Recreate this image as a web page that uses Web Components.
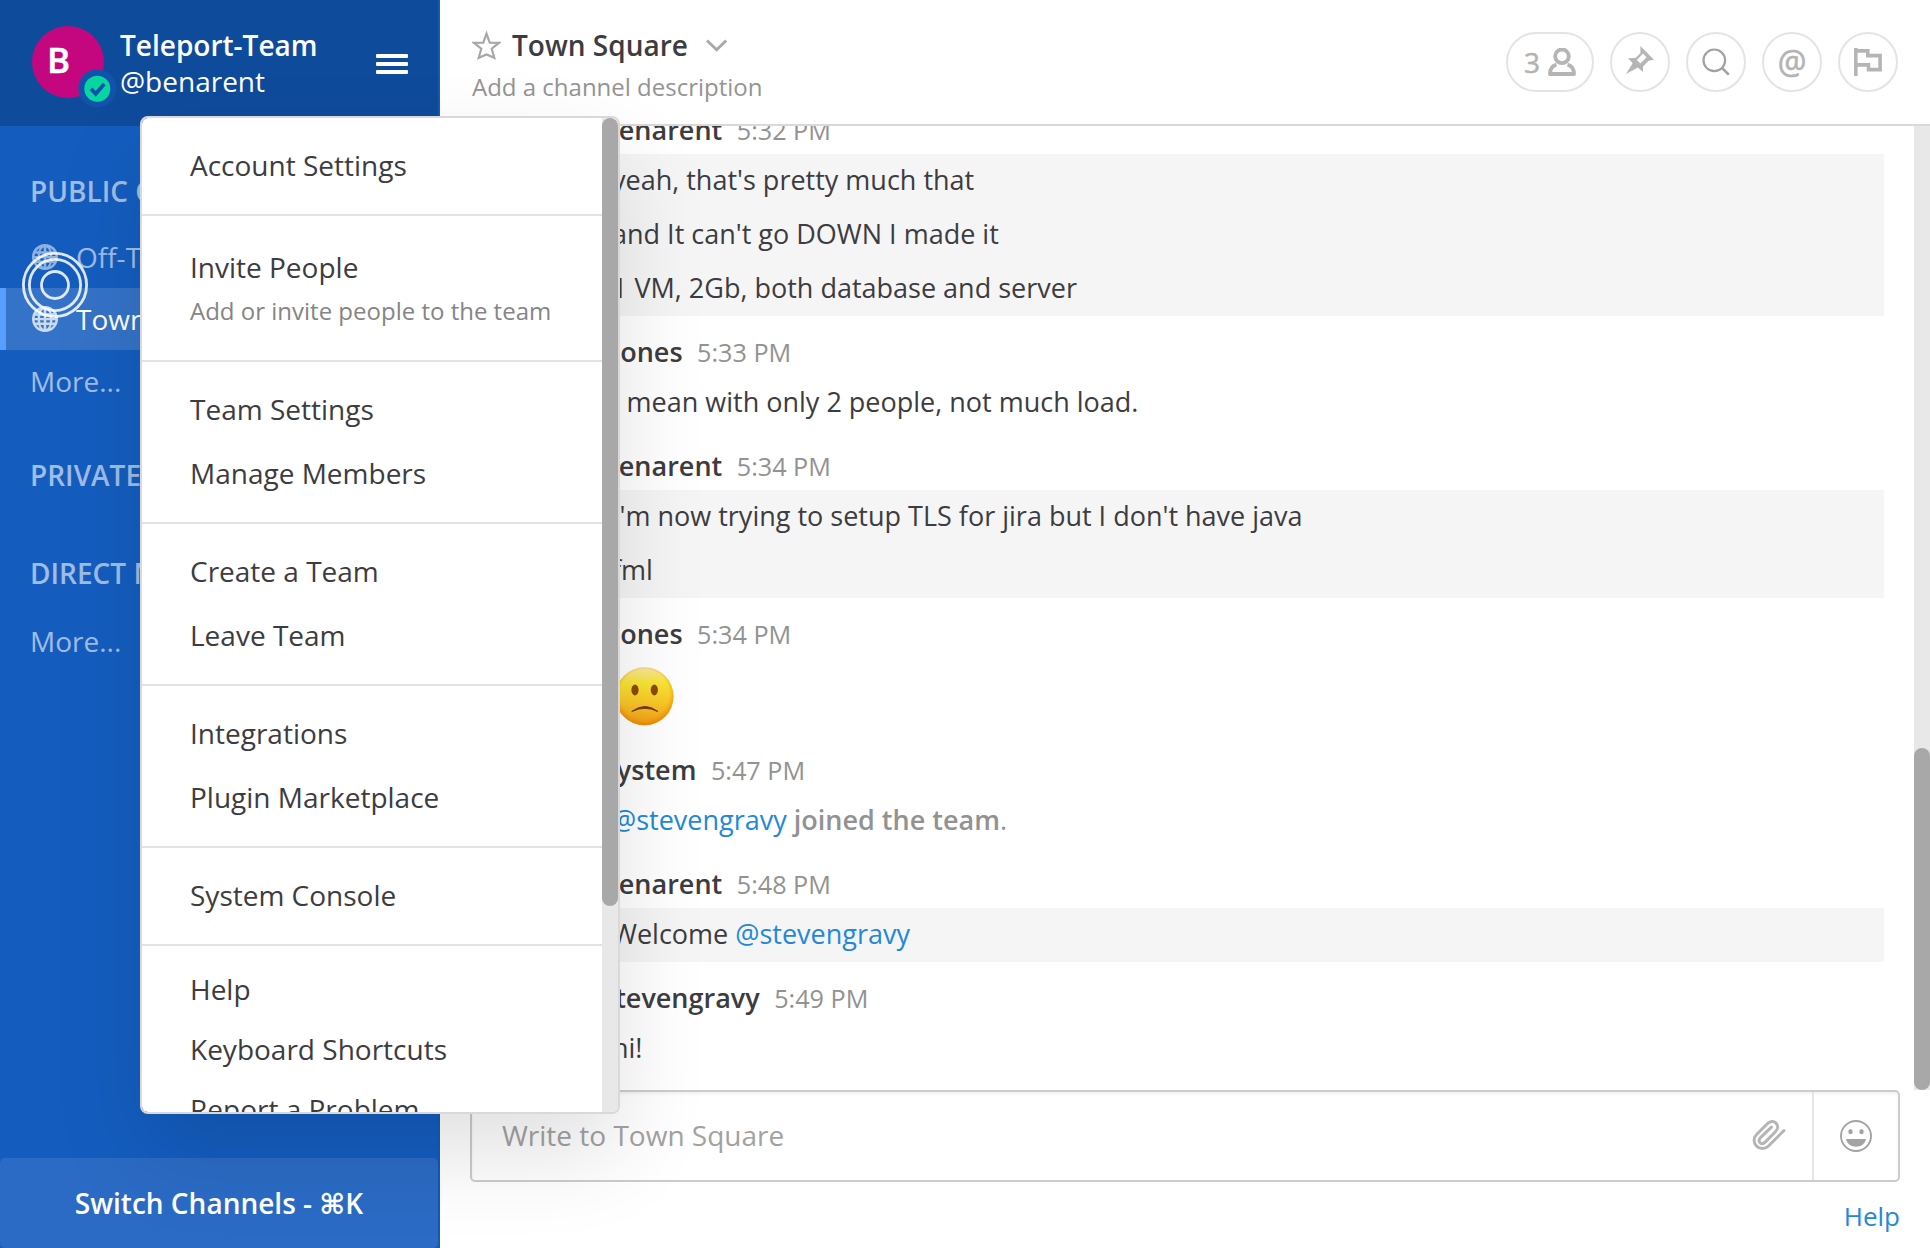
<!DOCTYPE html>
<html lang="en">
<head>
<meta charset="utf-8">
<title>Town Square - Teleport-Team</title>
<style>
html,body{margin:0;height:100%;overflow:hidden}
body{font-family:"Open Sans","DejaVu Sans",sans-serif;font-size:28px;color:#3d3c40;background:#fff}
</style>
</head>
<body>
<chat-app></chat-app>
<script>
const define = (name, css, html) => {
  customElements.define(name, class extends HTMLElement {
    constructor() {
      super();
      const root = this.attachShadow({ mode: 'open' });
      const t = document.createElement('template');
      t.innerHTML = `<style>*{box-sizing:border-box}${css}</style>` +
        (typeof html === 'function' ? html(this) : html);
      root.append(t.content.cloneNode(true));
    }
  });
};

const GLOBE = `<svg width="26" height="26" viewBox="0 0 26 26"><path d="M13 0a13 13 0 1 0 0 26a13 13 0 1 0 0-26M11.700 3.200v4.100h-3.300q1.200-3 3.300-4.100M14.300 3.200q2.100 1.100 3.300 4.100h-3.300zM7.800 3.900q-1 1.600-1.500 3.400h-2q1.400-2.200 3.500-3.400M18.200 3.900q2.100 1.200 3.500 3.400h-2q-.5-1.800-1.500-3.400M3.100 9.700h2.700l-.2 2.200h-2.900q0-1.200.4-2.200M8.300 9.700h3.400v2.200h-3.600zM14.300 9.700h3.400l.2 2.200h-3.600zM20.200 9.700h2.700q.4 1 .4 2.200h-2.900zM2.700 14.300h2.900l.2 2.200h-2.700q-.4-1-.4-2.200M8.100 14.300h3.600v2.200h-3.400zM14.300 14.300h3.600l-.2 2.200h-3.400zM20.400 14.300h2.900q0 1.200-.4 2.200h-2.700zM4.300 18.900h2q.5 1.800 1.500 3.300q-2.100-1.100-3.500-3.300M8.400 18.900h3.300v4q-2.100-1-3.300-4M14.300 18.900h3.300q-1.200 3-3.300 4zM19.700 18.900h2q-1.400 2.200-3.500 3.300q1-1.500 1.500-3.300"/></svg>`;

define('user-avatar', `
:host{display:block;position:relative;width:72px;height:72px;flex:none}
.face{width:72px;height:72px;border-radius:50%;background:#c4077f;color:#fff;font:600 35px/68px "Open Sans",sans-serif;padding-left:15px;-webkit-text-stroke:.5px #fff}
svg{position:absolute;left:46px;top:43px}`,
`<div class="face">B</div>
<svg width="39" height="39" viewBox="0 0 39 39"><circle cx="19.3" cy="19.3" r="19" fill="#1153ab"/><circle cx="19.3" cy="19.8" r="13" fill="#06d6a0"/><path d="M13 19.8l4.7 5 8.5-9.8" fill="none" stroke="#1153ab" stroke-width="3.8"/></svg>`);

define('team-header', `
:host{display:flex;height:126px;background:#0f4b9b;color:#fff;padding:26px 30px 0 32px;flex:none;align-items:flex-start}
.names{margin-left:16px;flex:1;line-height:36px;margin-top:1px}
.team{font-weight:600;height:36px}
.user{height:36px}
.burger{display:flex;flex-direction:column;gap:4px;margin-top:28px}
.burger i{display:block;width:32px;height:4px;background:#fff;border-radius:1px}`,
`<user-avatar></user-avatar>
<div class="names"><div class="team">Teleport-Team</div><div class="user">@benarent</div></div>
<div class="burger"><i></i><i></i><i></i></div>`);

define('channel-section', `
:host{display:block;white-space:nowrap}
h4{margin:0;padding-left:30px;font-weight:600;font-size:28px;line-height:67px;height:68px;color:rgba(255,255,255,.6)}`,
el => `<h4>${el.getAttribute('label')}</h4><slot></slot>`);

define('channel-item', `
:host{display:flex;height:62px;line-height:62px;padding-left:30px;color:rgba(255,255,255,.6);align-items:center}
:host([active]){background:rgba(255,255,255,.14);color:#fff;border-left:6px solid #579eff;padding-left:24px}
svg{fill:rgba(255,255,255,.52);fill-rule:evenodd;margin:0 18px 0 2px}
:host([active]) svg{fill:rgba(255,255,255,.74)}`,
el => `${el.hasAttribute('public') ? GLOBE : ''}<span><slot></slot></span>`);

define('side-bar', `
:host{display:flex;flex-direction:column;width:440px;height:100%;background:#145dbf;border-right:2px solid #1659b2;flex:none;overflow:hidden}
nav{flex:1;padding-top:32px;display:flex;flex-direction:column}
.priv{margin-top:30px}
.dir{margin-top:30px}
.dir channel-item{margin-top:2px}
team-header{margin-right:-2px;border-right:2px solid #1556ae}
.switch{height:90px;background:#2b6bc5;border-radius:5px;color:#fff;font-weight:600;text-align:center;line-height:90px;flex:none}`,
`<team-header></team-header>
<nav>
<channel-section label="PUBLIC CHANNELS"><channel-item public>Off-Topic</channel-item><channel-item public active>Town Square</channel-item><channel-item>More...</channel-item></channel-section>
<channel-section class="priv" label="PRIVATE CHANNELS"></channel-section>
<channel-section class="dir" label="DIRECT MESSAGES"><channel-item>More...</channel-item></channel-section>
</nav>
<div class="switch">Switch Channels - ⌘K</div>`);

define('round-button', `
:host{display:flex;align-items:center;justify-content:center;width:60px;height:60px;border:2px solid #e4e4e4;border-radius:30px;color:#b5b5b5}
:host([wide]){width:88px}`, `<slot></slot>`);

define('channel-header', `
:host{display:flex;height:126px;border-bottom:2px solid #d9d9d9;padding:0 32px;flex:none;background:#fff;justify-content:space-between}
.left{padding-top:27px}
.title{display:flex;font-weight:600;line-height:36px;height:36px}
.title .star{margin:4px 11px 0 0}
.title .chev{margin:11px 0 0 17px}
.desc{font-size:24px;line-height:34px;color:#949494;margin-top:7px}
.right{display:flex;gap:16px;padding-top:32px}
svg{display:block;fill:none;stroke:#b5b5b5}
.n{font-size:28px;line-height:40px;color:#b3b3b3;-webkit-text-stroke:.5px #b3b3b3;margin-right:8px}
.at{font-size:32px;line-height:40px;-webkit-text-stroke:.6px #b3b3b3}`,
`<div class="left"><div class="title">
<svg class="star" width="29" height="30" viewBox="0 0 29 30"><path style="stroke:#a8a8a8" stroke-width="2.200" d="M14.500 2.600L17.700 11.600L27 11.900L19.700 17.700L22.300 26.800L14.500 23.400L6.700 26.800L9.300 17.700L2 11.900L11.300 11.600Z"/></svg>
<span>Town Square</span>
<svg class="chev" width="24" height="16" viewBox="0 0 24 16"><path style="stroke:#a8a8a8" stroke-width="2.8" d="M2 2.4l9.6 9.4 9.6-9.4"/></svg></div>
<div class="desc">Add a channel description</div></div>
<div class="right">
<round-button wide><span class="n">3</span><svg width="28" height="28" viewBox="0 0 28 28" stroke-width="4"><circle cx="14" cy="8.3" r="6.8" stroke-width="3.8"/><path stroke-linejoin="round" d="M8.5 16.6C4.500 17.500 2 20.800 2 26h24c0-5.200-2.500-8.500-6.500-9.400" stroke-width="3.8"/></svg></round-button>
<round-button><svg width="28" height="28" viewBox="0 0 28 28" style="margin:-4px 0 0 0"><path fill="#b5b5b5" stroke="none" fill-rule="evenodd" d="M14.400 0L28 13.800L22.600 14.800L17 20.500L17 26L11.800 21.600L0 28L6.700 17.200L2 12.300L9.500 12L14.500 7ZM17 7.600L10.800 14L14.400 17.600L20.600 11.200Z"/></svg></round-button>
<round-button><svg width="28" height="28" viewBox="0 0 28 28" stroke-width="2.2" style="stroke:#a0a1a3"><circle cx="12.300" cy="12.300" r="10.800"/><path d="M19.800 19.800l7 6.800" stroke-width="2.600"/></svg></round-button>
<round-button><span class="at">@</span></round-button>
<round-button><svg width="28" height="28" viewBox="0 0 28 28" stroke-width="3.600"><path d="M1.800 0v28M1.800 2.900h12v4.700h12.300v14h-11.600v-4.700h-12.700"/></svg></round-button>
</div>`);

define('chat-post', `
:host{display:block;padding-right:30px}
.head{height:60px;padding:18px 0 0 162px;line-height:36px;font-size:27px;font-weight:600;white-space:pre;display:flex;align-items:baseline}
.head .in{display:flex;align-items:baseline;gap:14.500px}
time{font-weight:400;font-size:25.200px;color:#929292}
.body{padding-left:132px;margin-left:40px}
:host([own]) .body{background:#f5f5f5}`,
el => `<div class="head"><div class="in"><span>${el.getAttribute('author')}</span><time>${el.getAttribute('at')}</time></div></div><div class="body"><slot></slot></div>`);

define('post-line', `
:host{display:block;height:54px;line-height:51px;font-size:27px;white-space:pre}
:host([system]){color:#929292;font-weight:600}
::slotted(a){color:#2389d7;font-weight:400}
::slotted(em){font-style:normal;font-weight:400}`, `<slot></slot>`);

define('sad-emoji', `
:host{display:block;height:76px;padding:9px 0 0 3px}
svg{display:block}`,
`<svg width="59" height="59" viewBox="0 0 59 59">
<defs><linearGradient id="g" x1="0" y1="0" x2="0" y2="1"><stop offset="0" stop-color="#f9e7a0"/><stop offset=".28" stop-color="#f9e533"/><stop offset=".62" stop-color="#fac727"/><stop offset="1" stop-color="#f39a16"/></linearGradient>
<radialGradient id="r" cx=".5" cy=".46" r=".54"><stop offset=".78" stop-color="#f59b00" stop-opacity="0"/><stop offset="1" stop-color="#e87c00" stop-opacity=".75"/></radialGradient></defs>
<circle cx="29.500" cy="29.300" r="29" fill="url(#g)"/><circle cx="29.500" cy="29.300" r="29" fill="url(#r)"/>
<ellipse cx="20" cy="23" rx="3.600" ry="5.400" fill="#8a4b06"/><ellipse cx="39.300" cy="23" rx="3.600" ry="5.400" fill="#8a4b06"/>
<path d="M16.800 44.500Q30 34.600 42.900 44.500Q30 38.200 16.800 44.500Z" fill="#6e3606" stroke="#6e3606" stroke-width=".9"/></svg>`);

define('post-list', `
:host{display:flex;flex:1;min-height:0;overflow:hidden}
.posts{flex:1;display:flex;flex-direction:column;justify-content:flex-end;padding-bottom:14px;min-height:0}
chat-post{flex:none}
.bar{width:16px;background:#e8e8e8;display:flex;flex-direction:column;justify-content:flex-end}
.bar i{height:342px;background:#a8a8a8;border-radius:8px}`,
`<div class="posts">
<chat-post own author="benarent" at="5:32 PM"><post-line>yeah, that's pretty much that</post-line><post-line>and It can't go DOWN I made it</post-line><post-line>1 VM, 2Gb, both database and server</post-line></chat-post>
<chat-post author="tjones" at="5:33 PM"><post-line>I mean with only 2 people, not much load.</post-line></chat-post>
<chat-post own author="benarent" at="5:34 PM"><post-line>I'm now trying to setup TLS for jira but I don't have java</post-line><post-line>fml</post-line></chat-post>
<chat-post author="tjones" at="5:34 PM"><sad-emoji></sad-emoji></chat-post>
<chat-post author="System" at="5:47 PM"><post-line system><a>@stevengravy</a> joined the team<em>.</em></post-line></chat-post>
<chat-post own author="benarent" at="5:48 PM"><post-line>Welcome <a>@stevengravy</a></post-line></chat-post>
<chat-post author="stevengravy" at="5:49 PM"><post-line>hi!</post-line></chat-post>
</div><div class="bar"><i></i></div>`);

define('message-box', `
:host{display:block;height:158px;padding:0 30px;flex:none}
.box{height:92px;border:2px solid #ccc;border-radius:5px;display:flex;box-shadow:inset 0 2px 3px rgba(0,0,0,.06)}
.ph{flex:1;padding-left:30px;line-height:87px;color:#a2a2a2}
.clip{padding:27px 26px 0 0}
.smile{width:86px;border-left:2px solid #e6e6e6;display:flex;justify-content:center;padding-top:28px}
svg{display:block;fill:none}
.help{text-align:right;font-size:26px;color:#2389d7;line-height:36px;padding-top:16px}`,
`<div class="box"><div class="ph">Write to Town Square</div>
<div class="clip"><svg width="34" height="32" viewBox="0 0 34 32" stroke="#b5b5b5" stroke-width="3" stroke-linecap="round"><path d="M32 11.500L16.800 26.700C13.200 30.300 7.800 30.300 4.600 27.100C1.300 23.800 1.300 18.800 4.800 15.300L14.800 5.200C17.800 2.100 21.600 1.700 24 4.100C26.400 6.500 26.200 10 23.200 13L13.400 22.900C11.500 24.800 9.300 25 7.900 23.600C6.600 22.200 6.900 20.200 8.700 18.400L19.400 8.200"/></svg></div>
<div class="smile"><svg width="32" height="32" viewBox="0 0 32 32"><circle cx="16" cy="16" r="15" stroke="#a3a3a3" stroke-width="1.900"/><ellipse cx="10.500" cy="11.700" rx="2.200" ry="2.600" fill="#a3a3a3"/><ellipse cx="21.500" cy="11.700" rx="2.200" ry="2.600" fill="#a3a3a3"/><path d="M6 19h20c-1 4.900-5 7.700-10 7.700S7 23.900 6 19z" fill="#a3a3a3"/></svg></div></div>
<div class="help">Help</div>`);

define('menu-group', `
:host{display:block;padding:15px 0 17px;border-bottom:2px solid #e3e3e3}
:host([account]){padding:14px 0 17px}
:host([invite]){padding:19px 0 37px}
:host([help]){padding:13px 0 0;border:0}`, `<slot></slot>`);

define('menu-item', `
:host{display:block;line-height:64px;height:64px;padding-left:48px;white-space:nowrap}
:host([compact]){line-height:60px;height:60px}
:host([sub]){font-size:24px;line-height:24px;height:24px;color:#858585}`, `<slot></slot>`);

define('main-menu', `
:host{display:flex;position:absolute;left:140px;top:116px;width:480px;height:998px;border:2px solid #d9d9d9;border-radius:8px;background:#fff;background-clip:padding-box;overflow:hidden;box-shadow:0 40px 90px rgba(0,0,0,.12);color:#3d3c40}
.items{flex:1;overflow:hidden;padding-top:1px}
.bar{width:16px;background:#e8e8e8;flex:none}
.bar i{display:block;height:788px;border-radius:8px;background:#a8a8a8}`,
`<div class="items">
<menu-group account><menu-item>Account Settings</menu-item></menu-group>
<menu-group invite><menu-item>Invite People</menu-item><menu-item sub>Add or invite people to the team</menu-item></menu-group>
<menu-group><menu-item>Team Settings</menu-item><menu-item>Manage Members</menu-item></menu-group>
<menu-group><menu-item>Create a Team</menu-item><menu-item>Leave Team</menu-item></menu-group>
<menu-group><menu-item>Integrations</menu-item><menu-item>Plugin Marketplace</menu-item></menu-group>
<menu-group><menu-item>System Console</menu-item></menu-group>
<menu-group help><menu-item compact>Help</menu-item><menu-item compact>Keyboard Shortcuts</menu-item><menu-item compact>Report a Problem</menu-item></menu-group>
</div><div class="bar"><i></i></div>`);

define('click-ring', `
:host{display:block;position:absolute;left:21px;top:251px}
svg{display:block}`,
`<svg width="68" height="68" viewBox="0 0 68 68" fill="none" stroke="rgba(255,255,255,.85)" stroke-width="2.800"><circle cx="34" cy="34" r="31.600"/><circle cx="34" cy="34" r="25.600"/><circle cx="34" cy="34" r="13.500"/></svg>`);

define('chat-app', `
:host{display:flex;position:relative;width:1930px;height:1248px;overflow:hidden;background:#fff}
main{flex:1;display:flex;flex-direction:column;min-width:0}`,
`<side-bar></side-bar>
<main><channel-header></channel-header><post-list></post-list><message-box></message-box></main>
<main-menu></main-menu><click-ring></click-ring>`);
</script>
</body>
</html>
